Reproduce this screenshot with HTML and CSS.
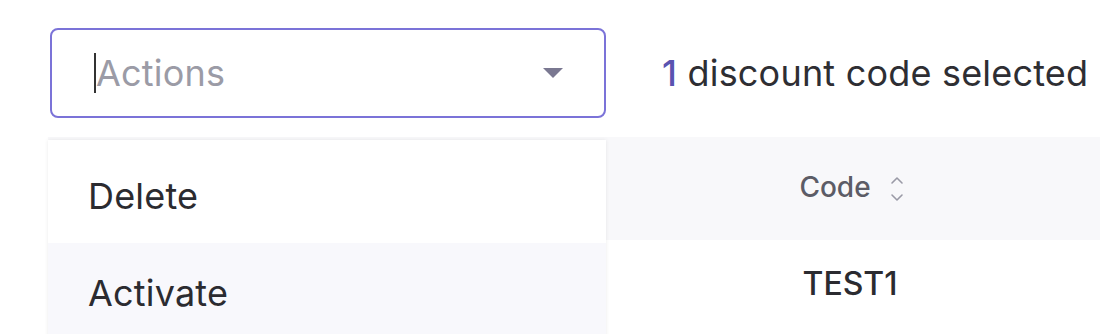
FILE: index.html
```html
<!DOCTYPE html>
<html>
<head>
<meta charset="utf-8">
<link rel="stylesheet" href="styles.css">
</head>
<body>
<div class="page">
  <div class="toolbar">
    <div class="select-wrap">
      <div class="select">
        <span class="caret"></span>
        <span class="placeholder">Actions</span>
        <svg class="arrow" width="22" height="12" viewBox="0 0 22 12"><path d="M1 1 L21 1 L11 11 Z" fill="#7a7891"/></svg>
      </div>
      <ul class="menu">
        <li class="item first-item">Delete</li>
        <li class="item hover">Activate</li>
      </ul>
    </div>
    <div class="count"><span class="num">1</span> discount code selected</div>
  </div>
  <div class="table">
    <div class="thead">
      <div class="cell first"></div>
      <div class="cell code-col">
        <span class="th-label">Code</span>
        <svg class="sort" width="16" height="32" viewBox="0 0 16 32"><path d="M3 10 L8 5 L13 10" fill="none" stroke="#9a9aa6" stroke-width="1.6" stroke-linecap="round" stroke-linejoin="round"/><path d="M3 22 L8 27 L13 22" fill="none" stroke="#9a9aa6" stroke-width="1.6" stroke-linecap="round" stroke-linejoin="round"/></svg>
      </div>
    </div>
    <div class="trow">
      <div class="cell first"></div>
      <div class="cell code-col"><span class="td">TEST1</span></div>
    </div>
  </div>
</div>
</body>
</html>
```
FILE: styles.css
```css
* { box-sizing: border-box; }
html, body { margin: 0; padding: 0; background: #ffffff; }
body { font-family: Inter, "Noto Sans", sans-serif; overflow: hidden; width: 1100px; height: 334px; }
.page { padding-top: 28px; }
.toolbar { display: flex; align-items: center; padding-left: 50px; }
.select-wrap { position: relative; width: 556px; }
.select {
  height: 90px;
  border: 2px solid #7b73d8;
  border-radius: 8px;
  display: flex;
  align-items: center;
  padding-left: 42px;
  padding-right: 40px;
  background: #fff;
}
.caret { width: 2px; height: 40px; background: #333; }
.placeholder { flex: 1; font-size: 36px; letter-spacing: 0.2px; color: #9b9ba6; }
.arrow { display: block; }
.count { margin-left: 56px; font-size: 36px; letter-spacing: 0.2px; color: #2e2e33; white-space: nowrap; }
.num { color: #5a53b0; font-weight: 500; }
.menu {
  position: absolute;
  left: -2px;
  top: 112px;
  width: 558px;
  margin: 0;
  padding: 0;
  list-style: none;
  background: #fff;
  box-shadow: 0 0 4px rgba(0,0,0,0.08);
  z-index: 2;
}
.item { height: 100px; display: flex; align-items: center; padding-left: 40px; font-size: 36px; letter-spacing: 0.2px; color: #2b2b30; }
.item.first-item { height: 103px; padding-top: 8px; }
.item.hover { background: #f8f8fc; }
.table { margin-top: 19px; margin-left: 48px; }
.thead, .trow { display: grid; grid-template-columns: 558px 488px; }
.thead { background: #f8f8fa; height: 103px; }
.trow { height: 90px; }
.cell { display: flex; align-items: center; }
.code-col { justify-content: center; }
.th-label { font-size: 28px; color: #5c5c66; font-weight: 500; margin-left: 4px; margin-bottom: 4px; }
.sort { margin-left: 18px; }
.td { font-size: 32px; color: #2b2b30; font-weight: 500; margin-bottom: 4px; }
```
